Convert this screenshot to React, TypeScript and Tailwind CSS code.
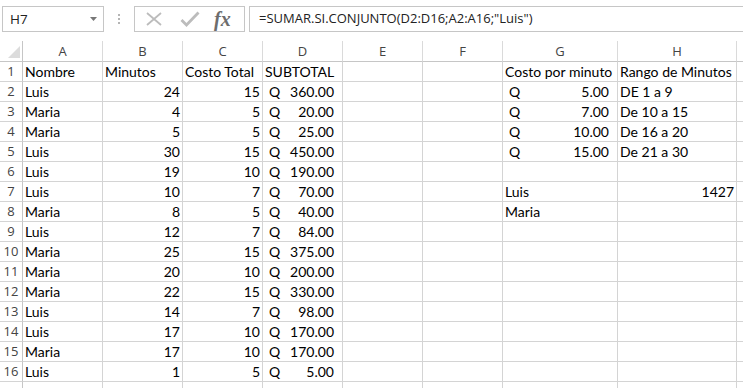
import React from "react";

type V = string | number | { acc: string } | null;

const ROWS: V[][] = [
  ["Nombre", "Minutos", "Costo Total", "SUBTOTAL", null, null, "Costo por minuto", "Rango de Minutos"],
  ["Luis", 24, 15, { acc: "360.00" }, null, null, { acc: "5.00" }, "DE 1 a 9"],
  ["Maria", 4, 5, { acc: "20.00" }, null, null, { acc: "7.00" }, "De 10 a 15"],
  ["Maria", 5, 5, { acc: "25.00" }, null, null, { acc: "10.00" }, "De 16 a 20"],
  ["Luis", 30, 15, { acc: "450.00" }, null, null, { acc: "15.00" }, "De 21 a 30"],
  ["Luis", 19, 10, { acc: "190.00" }, null, null, null, null],
  ["Luis", 10, 7, { acc: "70.00" }, null, null, "Luis", 1427],
  ["Maria", 8, 5, { acc: "40.00" }, null, null, "Maria", null],
  ["Luis", 12, 7, { acc: "84.00" }, null, null, null, null],
  ["Maria", 25, 15, { acc: "375.00" }, null, null, null, null],
  ["Maria", 20, 10, { acc: "200.00" }, null, null, null, null],
  ["Maria", 22, 15, { acc: "330.00" }, null, null, null, null],
  ["Luis", 14, 7, { acc: "98.00" }, null, null, null, null],
  ["Luis", 17, 10, { acc: "170.00" }, null, null, null, null],
  ["Maria", 17, 10, { acc: "170.00" }, null, null, null, null],
  ["Luis", 1, 5, { acc: "5.00" }, null, null, null, null],
];

const LETTERS = ["A", "B", "C", "D", "E", "F", "G", "H"];

const GRID = "grid grid-cols-[23px_80px_80px_80px_80px_80px_80px_115px_119px_6px]";
const HDR_FONT = { fontFamily: "'Open Sans', 'Noto Sans', sans-serif" };

function Cell({ v }: { v: V }) {
  const base =
    "h-[20px] border-b border-r border-[#d4d4d4] flex items-end pb-[1px] leading-[17px] whitespace-nowrap text-black";
  if (v === null) return <div className={base} />;
  if (typeof v === "number") return <div className={`${base} justify-end pr-[2px]`}>{v}</div>;
  if (typeof v === "string") return <div className={`${base} pl-[2px]`}>{v}</div>;
  return (
    <div className={`${base} justify-between pl-[6px] pr-[8px]`}>
      <span>Q</span>
      <span>{v.acc}</span>
    </div>
  );
}

function FormulaBar() {
  return (
    <div className="h-[41px] flex items-start pt-[6px] pl-[2px]" style={HDR_FONT}>
      {/* name box */}
      <div className="w-[102px] h-[26px] border border-[#c6c6c6] flex items-center justify-between pl-[7px] pr-[6px]">
        <span className="text-[13.5px] text-[#222]">H7</span>
        <svg width="7" height="4" viewBox="0 0 7 4">
          <polygon points="0,0 7,0 3.5,4" fill="#777" />
        </svg>
      </div>
      {/* grip dots */}
      <div className="w-[30px] h-[26px] flex flex-col items-center justify-center gap-[2px]">
        <div className="w-[2px] h-[2px] bg-[#b5b5b5]" />
        <div className="w-[2px] h-[2px] bg-[#b5b5b5]" />
        <div className="w-[2px] h-[2px] bg-[#b5b5b5]" />
      </div>
      {/* cancel / enter / fx */}
      <div className="w-[111px] h-[26px] border border-[#c6c6c6] flex items-center pl-[10px]">
        <svg width="18" height="14" viewBox="0 0 18 14">
          <path d="M2 1 L16 13 M16 1 L2 13" stroke="#bcbcbc" strokeWidth="1.8" />
        </svg>
        <svg width="20" height="16" viewBox="0 0 20 16" className="ml-[17px]">
          <path d="M1.5 9 L6.5 14 L18.5 1.5" stroke="#bcbcbc" strokeWidth="2.8" fill="none" />
        </svg>
        <span
          className="ml-[14px] text-[20px] italic font-bold leading-none text-[#6d6d6d]"
          style={{ fontFamily: "'Liberation Serif', 'DejaVu Serif', serif" }}
        >
          fx
        </span>
      </div>
      {/* formula input */}
      <div className="ml-[4px] flex-1 h-[26px] border border-[#c6c6c6] border-r-0 flex items-center pl-[9px]">
        <span className="text-[13px] text-[#222] whitespace-nowrap">=SUMAR.SI.CONJUNTO(D2:D16;A2:A16;"Luis")</span>
      </div>
    </div>
  );
}

export default function App() {
  return (
    <div className="w-[743px] h-[388px] overflow-hidden bg-white">
      <FormulaBar />
      <div className={GRID}>
        {/* header row */}
        <div className="h-[21px] border-b border-r border-[#c6c6c6] flex items-end justify-end pr-[2px] pb-[3px]">
          <svg width="12" height="12" viewBox="0 0 12 12">
            <polygon points="12,0 12,12 0,12" fill="#dcdcdc" />
          </svg>
        </div>
        {LETTERS.map((l) => (
          <div
            key={l}
            className="h-[21px] border-b border-r border-b-[#c6c6c6] border-r-[#dadada] flex items-center justify-center text-[13px] leading-[20px] text-[#444]"
            style={HDR_FONT}
          >
            {l}
          </div>
        ))}
        <div className="h-[21px] border-b border-[#c6c6c6]" />

        {ROWS.map((r, i) => (
          <React.Fragment key={i}>
            <div
              className="h-[20px] border-b border-r border-b-[#d4d4d4] border-r-[#c6c6c6] flex items-center justify-center text-[13px] leading-[19px] text-[#444]"
              style={HDR_FONT}
            >
              {i + 1}
            </div>
            {r.map((v, j) => (
              <div key={j} className="text-[14px]" style={{ fontFamily: "Lato, 'Liberation Sans', sans-serif" }}>
                <Cell v={v} />
              </div>
            ))}
            <div className="h-[20px] border-b border-[#d4d4d4]" />
          </React.Fragment>
        ))}

        {/* partial row 17 */}
        <div className="h-[6px] border-r border-[#c6c6c6]" />
        {LETTERS.map((l) => (
          <div key={l} className="h-[6px] border-r border-[#d4d4d4]" />
        ))}
        <div className="h-[6px]" />
      </div>
    </div>
  );
}
